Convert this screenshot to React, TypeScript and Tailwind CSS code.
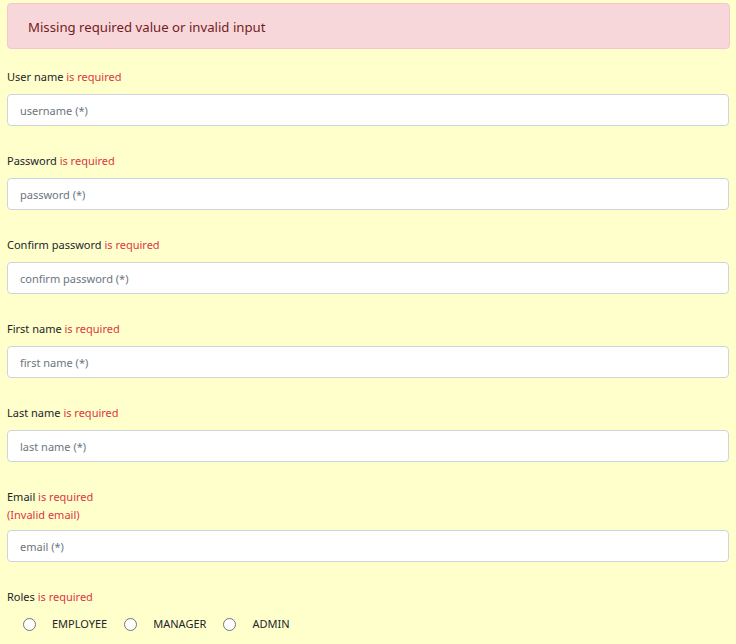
const fields = [
  { label: "User name", placeholder: "username (*)" },
  { label: "Password", placeholder: "password (*)" },
  { label: "Confirm password", placeholder: "confirm password (*)" },
  { label: "First name", placeholder: "first name (*)" },
  { label: "Last name", placeholder: "last name (*)" },
];

const roles = ["EMPLOYEE", "MANAGER", "ADMIN"];

const App = () => {
  return (
    <div
      className="min-h-[644px] bg-[#ffffcc] px-[7px] pt-[3px] text-[#212529]"
      style={{ fontFamily: '"Noto Sans", "Open Sans", sans-serif' }}
    >
      <div className="mr-[-1px] h-[46px] rounded-[4px] border border-[#f5c6cb] bg-[#f8d7da] px-[20px] pt-[3px] flex items-center text-[13.2px] text-[#721c24]">
        Missing required value or invalid input
      </div>
      <div className="mt-[19px]">
        {fields.map((f) => (
          <div key={f.label} className="mb-[26px]">
            <div className="h-[18px] text-[11px] leading-[18px]">
              {f.label} <span className="text-[#dc3545]">is required</span>
            </div>
            <input
              className="mt-[8px] block h-[32px] w-full rounded-[4px] border border-[#ced4da] bg-white px-[12px] text-[11px] placeholder:text-[#6c757d] outline-none"
              placeholder={f.placeholder}
            />
          </div>
        ))}
        <div className="mb-[26px]">
          <div className="text-[11px] leading-[18px]">
            Email <span className="text-[#dc3545]">is required</span>
          </div>
          <div className="text-[11px] leading-[18px] text-[#dc3545]">(Invalid email)</div>
          <input
            className="mt-[6px] block h-[32px] w-full rounded-[4px] border border-[#ced4da] bg-white px-[12px] text-[11px] placeholder:text-[#6c757d] outline-none"
            placeholder="email (*)"
          />
        </div>
        <div>
          <div className="text-[11px] leading-[18px]">
            Roles <span className="text-[#dc3545]">is required</span>
          </div>
          <div className="mt-[10px] flex items-center pl-[16px] text-[11px]">
            {roles.map((r) => (
              <label key={r} className="mr-[17px] flex items-center">
                <span className="inline-block h-[13px] w-[13px] rounded-full border border-[#767676] bg-white" />
                <span className="ml-[16px]">{r}</span>
              </label>
            ))}
          </div>
        </div>
      </div>
    </div>
  );
};

export default App;
